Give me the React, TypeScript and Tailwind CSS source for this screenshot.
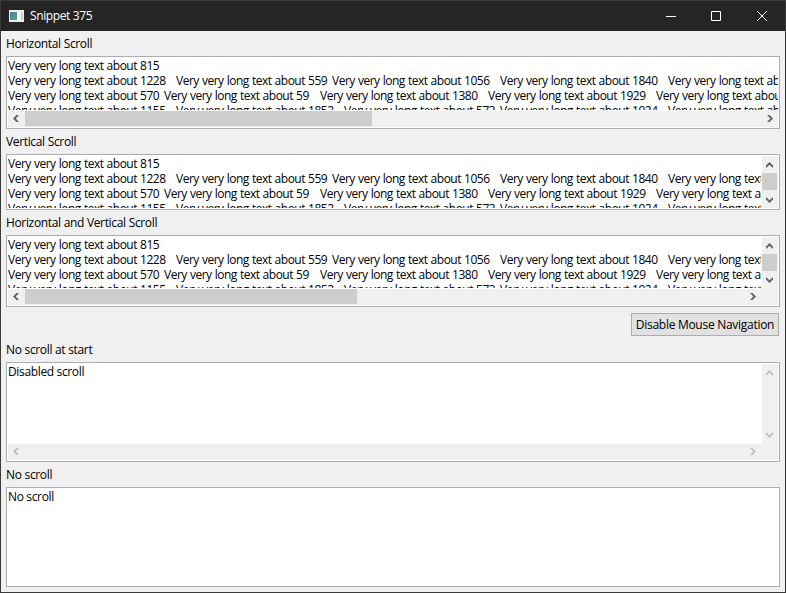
import React from "react";

type Cell = [string, number];

const L = "Very very long text about ";
const rows: Cell[][] = [
  [["815", 168]],
  [["1228", 168], ["559", 156], ["1056", 168], ["1840", 168], ["1283", 168]],
  [["570", 156], ["59", 156], ["1380", 168], ["1929", 168], ["1417", 168]],
  [["1155", 168], ["1852", 168], ["573", 156], ["1924", 168], ["1672", 168]],
];

const arrows = {
  up: { w: 7, h: 6, pts: "0,3.5 3.5,0 7,3.5 7,6 3.5,2.7 0,6" },
  down: { w: 7, h: 6, pts: "0,2.5 3.5,6 7,2.5 7,0 3.5,3.3 0,0" },
  left: { w: 6, h: 7, pts: "3.5,0 0,3.5 3.5,7 6,7 2.7,3.5 6,0" },
  right: { w: 6, h: 7, pts: "2.5,0 6,3.5 2.5,7 0,7 3.3,3.5 0,0" },
};

function Arrow({ dir, off }: { dir: keyof typeof arrows; off?: boolean }) {
  const a = arrows[dir];
  return (
    <svg width={a.w} height={a.h} viewBox={`0 0 ${a.w} ${a.h}`} className="block shrink-0">
      <polygon points={a.pts} fill={off ? "#bfbfbf" : "#606060"} />
    </svg>
  );
}

function HBar({ thumb, corner, off }: { thumb?: number; corner?: boolean; off?: boolean }) {
  return (
    <div className="flex h-4 shrink-0 bg-[#f0f0f0]">
      <div className="w-[17px] shrink-0 pt-1 pl-[5px]">
        <Arrow dir="left" off={off} />
      </div>
      <div className="flex-1">
        {thumb ? <div className="h-[15px] bg-[#cdcdcd]" style={{ width: thumb }} /> : null}
      </div>
      <div className="flex w-[17px] shrink-0 justify-end pt-1 pr-[5px]">
        <Arrow dir="right" off={off} />
      </div>
      {corner ? <div className="w-[17px] shrink-0" /> : null}
    </div>
  );
}

function VBar({ thumb, off, tight }: { thumb?: boolean; off?: boolean; tight?: boolean }) {
  return (
    <div className="flex w-4 shrink-0 flex-col bg-[#f0f0f0]">
      <div className="h-[17px] shrink-0 pt-1.5 pl-1">
        <Arrow dir="up" off={off} />
      </div>
      <div className="w-full flex-1">{thumb ? <div className="h-[17px] w-[15px] bg-[#cdcdcd]" /> : null}</div>
      <div className={`shrink-0 pl-1 ${tight ? "pb-[5px]" : "pb-1.5"}`}>
        <Arrow dir="down" off={off} />
      </div>
    </div>
  );
}

function Lines() {
  return (
    <div>
      {rows.map((r, i) => (
        <div key={i} className="flex h-[15px]">
          {r.map(([n, w], j) => (
            <span
              key={j}
              className="shrink-0 whitespace-pre tracking-[-0.5px] [word-spacing:0.5px]"
              style={{ width: w }}
            >
              {L + n}
            </span>
          ))}
        </div>
      ))}
    </div>
  );
}

const BOX = "mx-[5px] flex shrink-0 flex-col border border-[#abadb3] bg-white p-px text-[12px] leading-[15px]";
const LABEL =
  "ml-[5px] h-[25px] shrink-0 whitespace-pre text-[12px] leading-[25px] tracking-[-0.35px] [word-spacing:0.2px]";

export default function App() {
  return (
    <div className="flex h-[593px] w-[786px] flex-col overflow-hidden border border-[#3a3a3a] bg-[#f0f0f0] font-['Open_Sans','Noto_Sans',sans-serif] text-black">
      <div className="flex h-[30px] shrink-0 items-center bg-[#252525] text-white">
        <svg width="15" height="12" viewBox="0 0 15 12" className="ml-2 block">
          <defs>
            <linearGradient id="pane" x1="0" y1="0" x2="1" y2="1">
              <stop offset="0" stopColor="#4a7fa8" />
              <stop offset="1" stopColor="#55a878" />
            </linearGradient>
          </defs>
          <rect width="15" height="12" fill="#e9ecee" />
          <rect x="1" y="2" width="7" height="8" fill="url(#pane)" />
          <rect x="8" y="2" width="3" height="8" fill="#fff" />
          <rect x="12" y="2" width="2" height="8" fill="#cfd4d6" />
        </svg>
        <span className="ml-1.5 text-[12px] tracking-[-0.38px]">Snippet 375</span>
        <div className="ml-auto flex items-center">
          <svg width="120" height="12" viewBox="0 0 120 12" className="mr-3 block" fill="none" stroke="#fff">
            <path d="M13 6.5h10M58.5 1.5h9v9h-9z" />
            <path d="M104 1l10 10M114 1l-10 10" />
          </svg>
        </div>
      </div>

      <div className={LABEL}>Horizontal Scroll</div>
      <div className={`${BOX} h-[73px]`}>
        <div className="mb-px min-h-0 flex-1 overflow-hidden">
          <Lines />
        </div>
        <HBar thumb={347} />
      </div>

      <div className={LABEL}>Vertical Scroll</div>
      <div className={`${BOX} h-14`}>
        <div className="flex min-h-0 flex-1">
          <div className="mr-px min-w-0 flex-1 overflow-hidden">
            <Lines />
          </div>
          <VBar thumb tight />
        </div>
      </div>

      <div className={LABEL}>Horizontal and Vertical Scroll</div>
      <div className={`${BOX} h-[72px]`}>
        <div className="flex min-h-0 flex-1">
          <div className="mr-px mb-px min-w-0 flex-1 overflow-hidden">
            <Lines />
          </div>
          <VBar thumb />
        </div>
        <HBar thumb={332} corner />
      </div>

      <div className="flex h-[30px] shrink-0 justify-end pt-1.5 pr-1.5">
        <button className="flex h-[23px] w-[148px] items-center justify-center border border-[#adadad] bg-[#e1e1e1] text-[12px] tracking-[-0.28px] whitespace-pre">
          Disable Mouse Navigation
        </button>
      </div>

      <div className={LABEL}>No scroll at start</div>
      <div className={`${BOX} h-[100px]`}>
        <div className="flex min-h-0 flex-1">
          <div className="min-w-0 flex-1 tracking-[-0.35px]">Disabled scroll</div>
          <VBar off />
        </div>
        <HBar corner off />
      </div>

      <div className={LABEL}>No scroll</div>
      <div className={`${BOX} h-[100px]`}>
        <div className="tracking-[-0.35px]">No scroll</div>
      </div>
    </div>
  );
}
